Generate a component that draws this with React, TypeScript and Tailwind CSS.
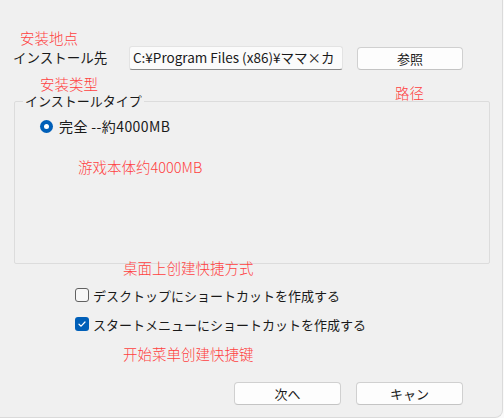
import React from "react";

const jp = { fontFamily: '"Noto Sans CJK JP", "Noto Sans", sans-serif' };
const sc = { fontFamily: '"Noto Sans CJK SC", "Noto Sans", sans-serif' };

function Note({ children, className = "" }: { children: React.ReactNode; className?: string }) {
  return (
    <div
      className={`text-[14.5px] font-light leading-[14px] text-[#ff4040] whitespace-nowrap ${className}`}
      style={sc}
    >
      {children}
    </div>
  );
}

function Button({ children, className = "" }: { children: React.ReactNode; className?: string }) {
  return (
    <div
      className={`flex h-[23px] items-center justify-center rounded-[4px] border border-[#d0d0d0] border-b-[#c4c4c4] bg-[#fdfdfd] text-[13px] leading-none text-[#1a1a1a] ${className}`}
      style={jp}
    >
      {children}
    </div>
  );
}

function Checkbox({ checked, label }: { checked: boolean; label: string }) {
  return (
    <div className="flex h-[20px] items-center pl-[75px]">
      {checked ? (
        <div className="flex h-[14px] w-[14px] items-center justify-center rounded-[3px] bg-[#005fb8]">
          <svg width="10" height="10" viewBox="0 0 10 10">
            <path d="M2 5.2 L4.1 7.2 L8 3" fill="none" stroke="#ffffff" strokeWidth="1.2" strokeLinecap="round" strokeLinejoin="round" />
          </svg>
        </div>
      ) : (
        <div className="h-[14px] w-[14px] rounded-[3px] border border-[#616161] bg-[#f7f7f7]" />
      )}
      <span className="ml-[4px] text-[13px] leading-none text-[#1a1a1a] whitespace-nowrap" style={jp}>
        {label}
      </span>
    </div>
  );
}

export default function App() {
  return (
    <div className="h-[418px] w-[504px] bg-[#fafafa]">
      <div className="flex h-[418px] w-[503px] flex-col overflow-hidden rounded-br-[8px] border-r border-b border-[#dadada] bg-[#f0f0f0]">
        <Note className="ml-[20px] mt-[31px]">安装地点</Note>

        <div className="mt-[1px] flex h-[24px] items-center">
          <div className="ml-[13px] w-[116px] text-[13.5px] leading-none text-[#1a1a1a] whitespace-nowrap" style={jp}>
            インストール先
          </div>
          <div className="flex h-[24px] w-[214px] items-center overflow-hidden rounded-[3px] border border-[#e3e3e3] border-b-[#8a8a8a] bg-[#fbfbfb] pl-[3px]">
            <span className="text-[13.5px] leading-none text-[#1a1a1a] whitespace-nowrap" style={jp}>
              C:¥Program Files (x86)¥ママ×カ
            </span>
          </div>
          <Button className="ml-[14px] w-[106px]">参照</Button>
        </div>

        <div className="flex h-[14px] items-start">
          <Note className="ml-[40px] mt-[7px]">安装类型</Note>
          <Note className="ml-[297px] mt-[16px]">路径</Note>
        </div>

        <fieldset className="ml-[14px] mt-[10px] h-[170px] w-[476px] rounded-[2px] border border-[#dcdcdc]">
          <legend className="ml-[8px] px-[2px] text-[13px] leading-[14px] text-[#1a1a1a]" style={jp}>
            インストールタイプ
          </legend>
          <div className="pl-[25px] pt-[11px]">
            <div className="flex h-[14px] items-center">
              <div className="flex h-[13px] w-[13px] items-center justify-center rounded-full bg-[#005fb8]">
                <div className="h-[5px] w-[5px] rounded-full bg-white" />
              </div>
              <span className="ml-[6px] text-[14px] tracking-[0.4px] leading-none text-[#1a1a1a] whitespace-nowrap" style={jp}>
                完全 --約4000MB
              </span>
            </div>
            <Note className="ml-[38px] mt-[27px]">游戏本体约4000MB</Note>
          </div>
        </fieldset>

        <Note className="ml-[123px] mt-[-3px]">桌面上创建快捷方式</Note>

        <div className="mt-[10px] flex flex-col gap-[9px]">
          <Checkbox checked={false} label="デスクトップにショートカットを作成する" />
          <Checkbox checked={true} label="スタートメニューにショートカットを作成する" />
        </div>

        <Note className="ml-[123px] mt-[13px]">开始菜单创建快捷键</Note>

        <div className="ml-[234px] mt-[21px] flex gap-[15px]">
          <Button className="w-[107px]">次へ</Button>
          <Button className="w-[107px]">キャン</Button>
        </div>
      </div>
    </div>
  );
}
